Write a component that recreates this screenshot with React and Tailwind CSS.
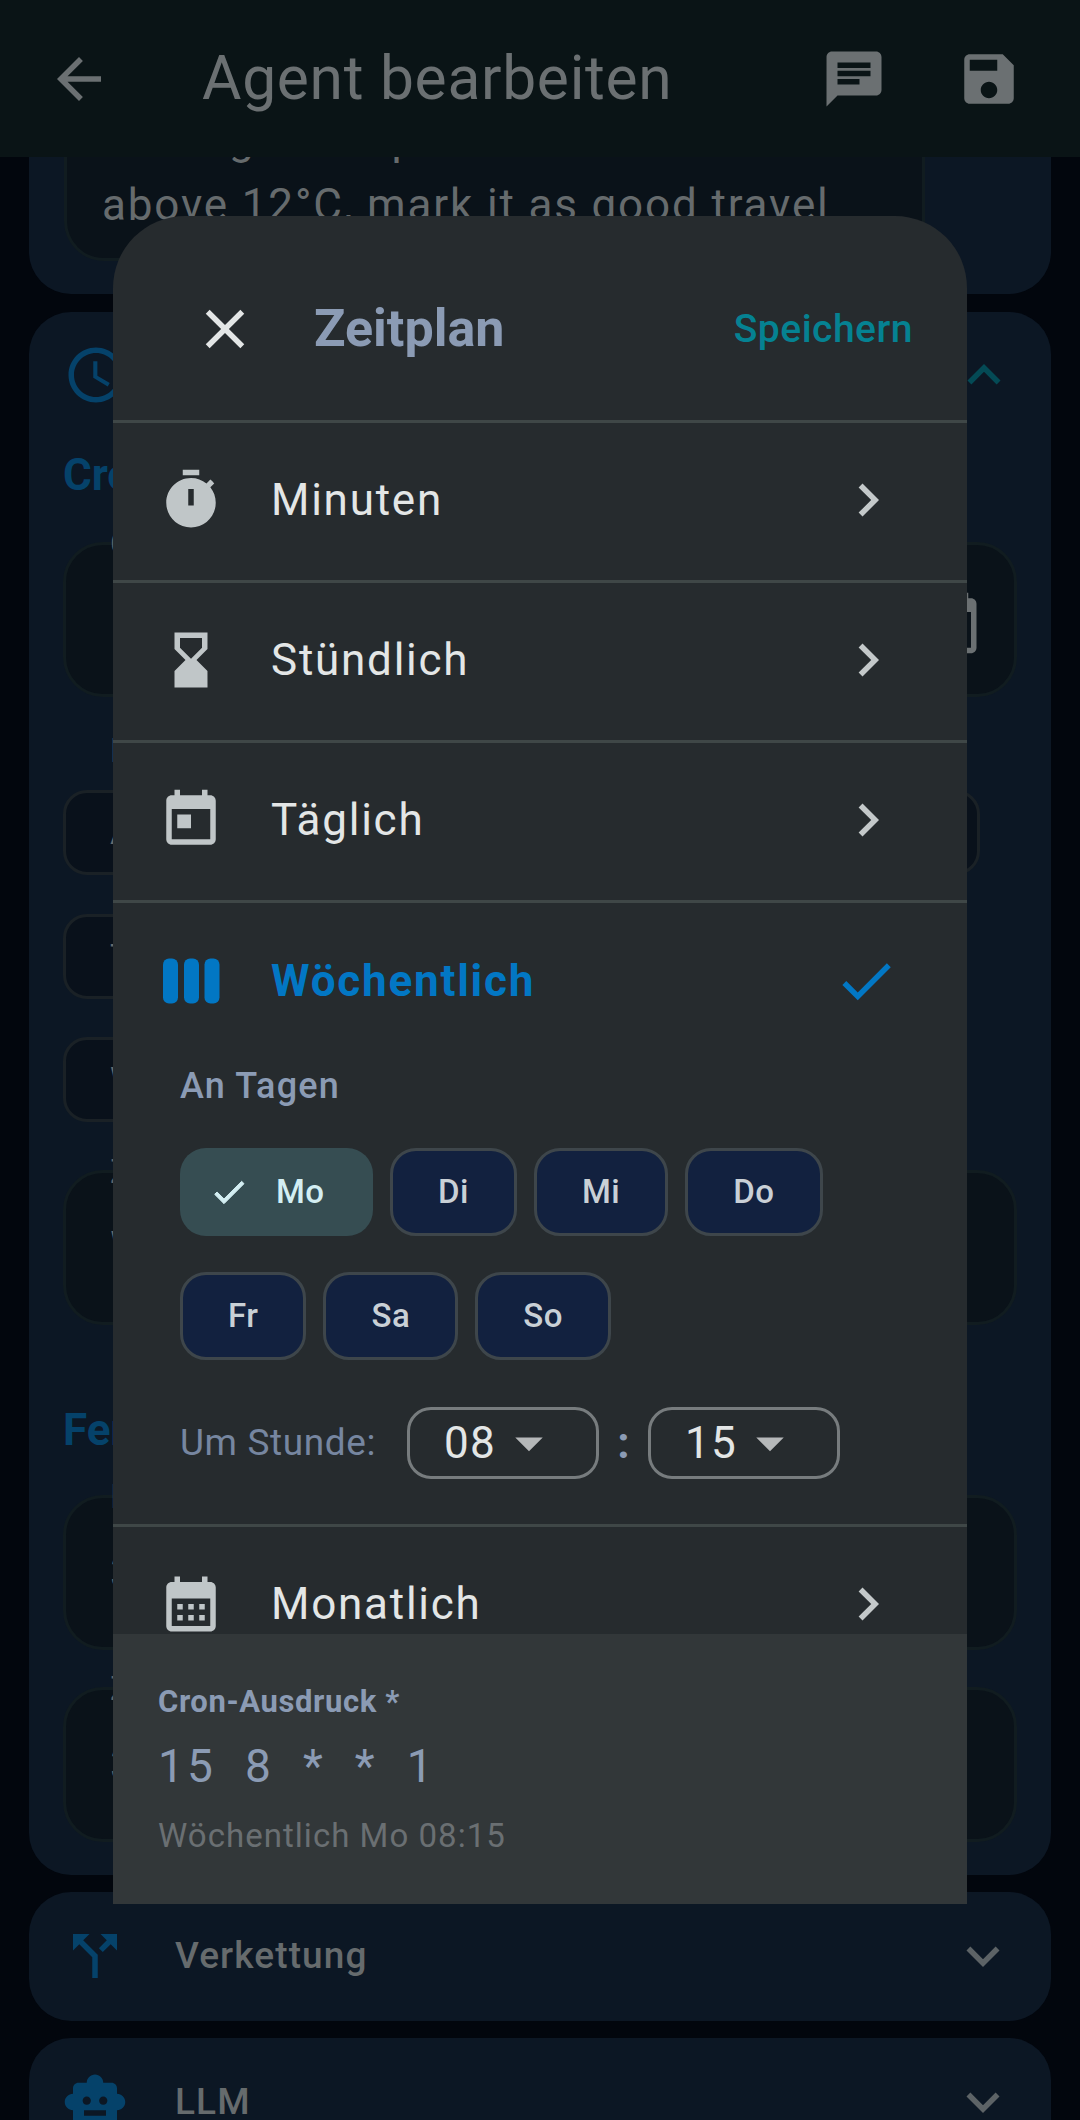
import React from 'react';

const Icon = ({ d, size = 66, className = '' }) => (
  <svg viewBox="0 0 24 24" width={size} height={size} fill="currentColor" className={`shrink-0 ${className}`}>
    <path d={d} />
  </svg>
);

const paths = {
  back: 'M20 11H7.83l5.59-5.59L12 4l-8 8 8 8 1.41-1.41L7.83 13H20v-2z',
  chat: 'M20 2H4c-1.1 0-1.99.9-1.99 2L2 22l4-4h14c1.1 0 2-.9 2-2V4c0-1.1-.9-2-2-2zM6 9h12v2H6V9zm8 5H6v-2h8v2zm4-6H6V6h12v2z',
  save: 'M17 3H5c-1.11 0-2 .9-2 2v14c0 1.1.89 2 2 2h14c1.1 0 2-.9 2-2V7l-4-4zm-5 16c-1.66 0-3-1.34-3-3s1.34-3 3-3 3 1.34 3 3-1.34 3-3 3zm3-10H5V5h10v4z',
  close: 'M19 6.41L17.59 5 12 10.59 6.41 5 5 6.41 10.59 12 5 17.59 6.41 19 12 13.41 17.59 19 19 17.59 13.41 12z',
  timer: 'M9 1h6v2H9zM19.03 7.39l1.42-1.42c-.43-.51-.9-.99-1.41-1.41l-1.42 1.42C16.07 4.74 14.12 4 12 4c-4.97 0-9 4.03-9 9s4.02 9 9 9 9-4.03 9-9c0-2.12-.74-4.07-1.97-5.61zM13 14h-2V8h2v6z',
  hourglass: 'M18 22l-.01-6L14 12l3.99-4.01L18 2H6v6l4 4-4 3.99V22h12zM8 7.5V4h8v3.5l-4 4-4-4z',
  today: 'M19 3h-1V1h-2v2H8V1H6v2H5c-1.11 0-1.99.9-1.99 2L3 19c0 1.1.89 2 2 2h14c1.1 0 2-.9 2-2V5c0-1.1-.9-2-2-2zm0 16H5V8h14v11zM7 10h5v5H7z',
  month: 'M19 4h-1V2h-2v2H8V2H6v2H5C3.89 4 3.01 4.9 3.01 6L3 20c0 1.1.89 2 2 2h14c1.1 0 2-.9 2-2V6c0-1.1-.9-2-2-2zm0 16H5V10h14v10zM9 14H7v-2h2v2zm4 0h-2v-2h2v2zm4 0h-2v-2h2v2zm-8 4H7v-2h2v2zm4 0h-2v-2h2v2zm4 0h-2v-2h2v2z',
  chevron: 'M10 6L8.59 7.41 13.17 12l-4.58 4.59L10 18l6-6z',
  check: 'M9 16.17L4.83 12l-1.42 1.41L9 19 21 7l-1.41-1.41z',
  drop: 'M7 10l5 5 5-5z',
  more: 'M16.59 8.59L12 13.17 7.41 8.59 6 10l6 6 6-6z',
  less: 'M12 8l-6 6 1.41 1.41L12 10.83l4.59 4.58L18 14z',
  split: 'M14 4l2.29 2.29-2.88 2.88 1.42 1.42 2.88-2.88L20 10V4h-6zm-4 0H4v6l2.29-2.29 4.71 4.7V20h2v-8.41l-5.29-5.3L10 4z',
  toy: 'M20 9V7c0-1.1-.9-2-2-2h-3c0-1.66-1.34-3-3-3S9 3.34 9 5H6c-1.1 0-2 .9-2 2v2c-1.66 0-3 1.34-3 3s1.34 3 3 3v4c0 1.1.9 2 2 2h12c1.1 0 2-.9 2-2v-4c1.66 0 3-1.34 3-3s-1.34-3-3-3zM7.5 11.5c0-.83.67-1.5 1.5-1.5s1.5.67 1.5 1.5S9.83 13 9 13s-1.5-.67-1.5-1.5zM16 17H8v-2h8v2zm-1-4c-.83 0-1.5-.67-1.5-1.5S14.17 10 15 10s1.5.67 1.5 1.5S15.83 13 15 13z',
  schedule: 'M11.99 2C6.47 2 2 6.48 2 12s4.47 10 9.99 10C17.52 22 22 17.52 22 12S17.52 2 11.99 2zM12 20c-4.42 0-8-3.58-8-8s3.58-8 8-8 8 3.58 8 8-3.58 8-8 8zm.5-13H11v6l5.25 3.15.75-1.23-4.5-2.67z',
  calendar: 'M20 3h-1V1h-2v2H7V1H5v2H4c-1.1 0-2 .9-2 2v16c0 1.1.9 2 2 2h16c1.1 0 2-.9 2-2V5c0-1.1-.9-2-2-2zm0 18H4V8h16v13z',
};

// faded form behind the sheet
const FieldBox = ({ label, value, height = 'h-[155px]', className = '', children }) => (
  <div className={`relative flex items-center rounded-[40px] border-[3px] border-[#111c20] bg-[#0a1219] pl-[44px] pr-[32px] ${height} ${className}`}>
    {label && <span className="absolute left-[44px] top-[-19px] text-[33px] leading-[36px] text-[#5f6568]">{label}</span>}
    <span className="flex-1 text-[44px] text-[#666b6d]">{value}</span>
    {children}
  </div>
);

const Choice = ({ text, className = '' }) => (
  <div className={`flex h-[85px] items-center rounded-[24px] border-[3px] border-[#1a2126] bg-[#09111b] pl-[44px] text-[33px] text-[#666b6d] ${className}`}>
    {text}
  </div>
);

const Collapsed = ({ icon, title, className = '' }) => (
  <div className={`flex h-[129px] items-start rounded-[42px] bg-[#0c1724] pl-[33px] pr-[35px] pt-[31px] ${className}`}>
    <Icon d={icon} className="text-[#05426a]" />
    <span className="ml-[47px] mt-[7px] flex-1 text-[37px] font-medium leading-[52px] tracking-[1.1px] text-[#666b6d]">{title}</span>
    <Icon d={paths.more} className="text-[#5d6366]" />
  </div>
);

const Row = ({ icon, label }) => (
  <div className="flex h-[160px] shrink-0 items-center border-b-[3px] border-[#3f4747] pb-[3px] pl-[45px] pr-[66px]">
    <Icon d={icon} className="text-[#c0c6c8]" />
    <span className="ml-[47px] flex-1 text-[44px] leading-[52px] tracking-[1.75px] text-[#e3e6e6]">{label}</span>
    <Icon d={paths.chevron} className="text-[#c4c9ca]" />
  </div>
);

const Day = ({ label }) => (
  <div className="flex h-[88px] items-center rounded-[26px] border-[3px] border-[#3e464b] bg-[#12213f] px-[45px] text-[33px] font-medium tracking-[0.5px] text-[#c9d0d6]">
    {label}
  </div>
);

const TimeSelect = ({ value }) => (
  <div className="flex h-[72px] w-[192px] items-center rounded-[24px] border-[3px] border-[#777c7e] pl-[34px]">
    <span className="text-[44px] leading-[52px] tracking-[1.2px] text-[#e3e6e6]">{value}</span>
    <Icon d={paths.drop} className="text-[#b5b8b9]" />
  </div>
);

const App = () => {
  return (
    <div className="relative h-[2120px] w-[1080px] overflow-hidden bg-[#02060d] font-[Roboto,sans-serif]">
      <header className="relative z-10 flex h-[157px] items-center bg-[#0a1416] pl-[46px] text-[#6b7072]">
        <Icon d={paths.back} />
        <span className="ml-[90px] flex-1 text-[60.5px] leading-[72px] tracking-[0.7px]">Agent bearbeiten</span>
        <Icon d={paths.chat} />
        <Icon d={paths.save} className="ml-[69px] mr-[58px]" />
      </header>

      <main className="px-[29px]">
        <div className="flex h-[137px] flex-col justify-end overflow-hidden rounded-b-[42px] bg-[#0c1724] pb-[33px] pl-[35px]">
          <div className="w-[861px] shrink-0 rounded-b-[40px] border-[3px] border-[#111c20] bg-[#0a1219] pb-[20px] pl-[35px] text-[44px] leading-[66px] tracking-[1.85px] text-[#666b6d]">
            <div>Note: get temp if it is</div>
            <div>above 12°C, mark it as good travel</div>
          </div>
        </div>

        <section className="mt-[18px] flex h-[1563px] flex-col rounded-[42px] bg-[#0c1724] px-[34px] pt-[30px]">
          <div className="flex items-center">
            <Icon d={paths.schedule} className="text-[#05426a]" />
            <span className="flex-1" />
            <Icon d={paths.less} className="text-[#044a55]" />
          </div>
          <h2 className="mt-[41px] text-[44px] font-bold leading-[52px] text-[#05426a]">Cron</h2>
          <FieldBox label="Cron" className="mt-[41px]">
            <Icon d={paths.calendar} className="mb-[-6px] text-[#6b7072]" />
          </FieldBox>
          <span className="ml-[47px] mt-[36px] text-[33px] leading-[36px] text-[#5f6568]">Beispiele</span>
          <Choice text="Alle" className="mt-[21px] w-[917px]" />
          <Choice text="Täglich" className="mt-[39px] w-[800px]" />
          <Choice text="Wöchentlich" className="mt-[38px] w-[800px]" />
          <FieldBox label="Zeitzone" value="Wien" className="mt-[48px]" />
          <h2 className="mt-[79px] text-[44px] font-bold leading-[52px] text-[#05426a]">Fenster</h2>
          <FieldBox label="Intervall" value="30" className="mt-[39px]" />
          <FieldBox label="Zeit" value="30" className="mt-[37px]" />
        </section>

        <Collapsed icon={paths.split} title="Verkettung" className="mt-[17px]" />
        <Collapsed icon={paths.toy} title="LLM" className="mt-[17px]" />
      </main>

      {/* bottom sheet */}
      <div className="absolute left-[113px] top-[216px] z-20 flex h-[1688px] w-[854px] flex-col overflow-hidden rounded-t-[72px] bg-[#262b2e]">
        <div className="h-[1418px] overflow-hidden">
          <div className="flex h-[207px] items-center border-b-[3px] border-[#3f4747] pl-[79px] pr-[54px] pt-[22px]">
            <Icon d={paths.close} className="text-[#e3e6e6]" />
            <span className="ml-[56px] flex-1 text-[52px] font-bold leading-[60px] text-[#8b9bb4]">Zeitplan</span>
            <span className="text-[39px] font-medium leading-[44px] tracking-[0.5px] text-[#058292]">Speichern</span>
          </div>
          <Row icon={paths.timer} label="Minuten" />
          <Row icon={paths.hourglass} label="Stündlich" />
          <Row icon={paths.today} label="Täglich" />

          <div className="h-[624px] border-b-[3px] border-[#3f4747]">
            <div className="flex h-[157px] items-center pb-[2px] pl-[45px] pr-[68px]">
              <svg viewBox="0 0 66 66" width="66" height="66" fill="#0277c4" className="shrink-0">
                <rect x="5" y="10.5" width="15" height="45" rx="6" />
                <rect x="26" y="10.5" width="15" height="45" rx="6" />
                <rect x="46.5" y="10.5" width="15" height="45" rx="6" />
              </svg>
              <span className="ml-[47px] flex-1 text-[44px] font-bold leading-[52px] tracking-[1.8px] text-[#0277c4]">Wöchentlich</span>
              <Icon d={paths.check} className="text-[#0277c4]" />
            </div>
            <div className="pl-[67px]">
              <div className="mt-[4px] text-[36px] font-medium leading-[44px] tracking-[1.2px] text-[#8b9bb4]">An Tagen</div>
              <div className="mt-[40px] flex w-[700px] flex-wrap gap-x-[17px] gap-y-[36px]">
                <div className="flex h-[88px] w-[193px] items-center rounded-[26px] bg-[#364d52] pl-[29px] text-[33px] font-medium tracking-[0.5px] text-[#d3eef2]">
                  <Icon d={paths.check} size={40} className="mr-[27px] stroke-current stroke-[0.6] text-[#d3eef2]" />
                  Mo
                </div>
                <Day label="Di" />
                <Day label="Mi" />
                <Day label="Do" />
                <Day label="Fr" />
                <Day label="Sa" />
                <Day label="So" />
              </div>
              <div className="mt-[47px] flex items-center">
                <span className="w-[227px] text-[37px] leading-[44px] tracking-[0.6px] text-[#7686a0]">Um Stunde:</span>
                <TimeSelect value="08" />
                <span className="w-[49px] text-center text-[44px] font-bold leading-[52px] text-[#8b9bb4]">:</span>
                <TimeSelect value="15" />
              </div>
            </div>
          </div>
          <Row icon={paths.month} label="Monatlich" />
        </div>

        <div className="flex-1 bg-[#323739] pl-[45px] pt-[49px]">
          <div className="text-[31px] font-bold leading-[38px] tracking-[0.6px] text-[#8b9bb4]">Cron-Ausdruck *</div>
          <div className="mt-[19px] whitespace-pre text-[46px] leading-[52px] tracking-[3.1px] text-[#8b9bb4]">15  8  *  *  1</div>
          <div className="mt-[24px] text-[33px] leading-[40px] tracking-[1.03px] text-[#6a6f72]">Wöchentlich Mo 08:15</div>
        </div>
      </div>
    </div>
  );
};

export default App;
